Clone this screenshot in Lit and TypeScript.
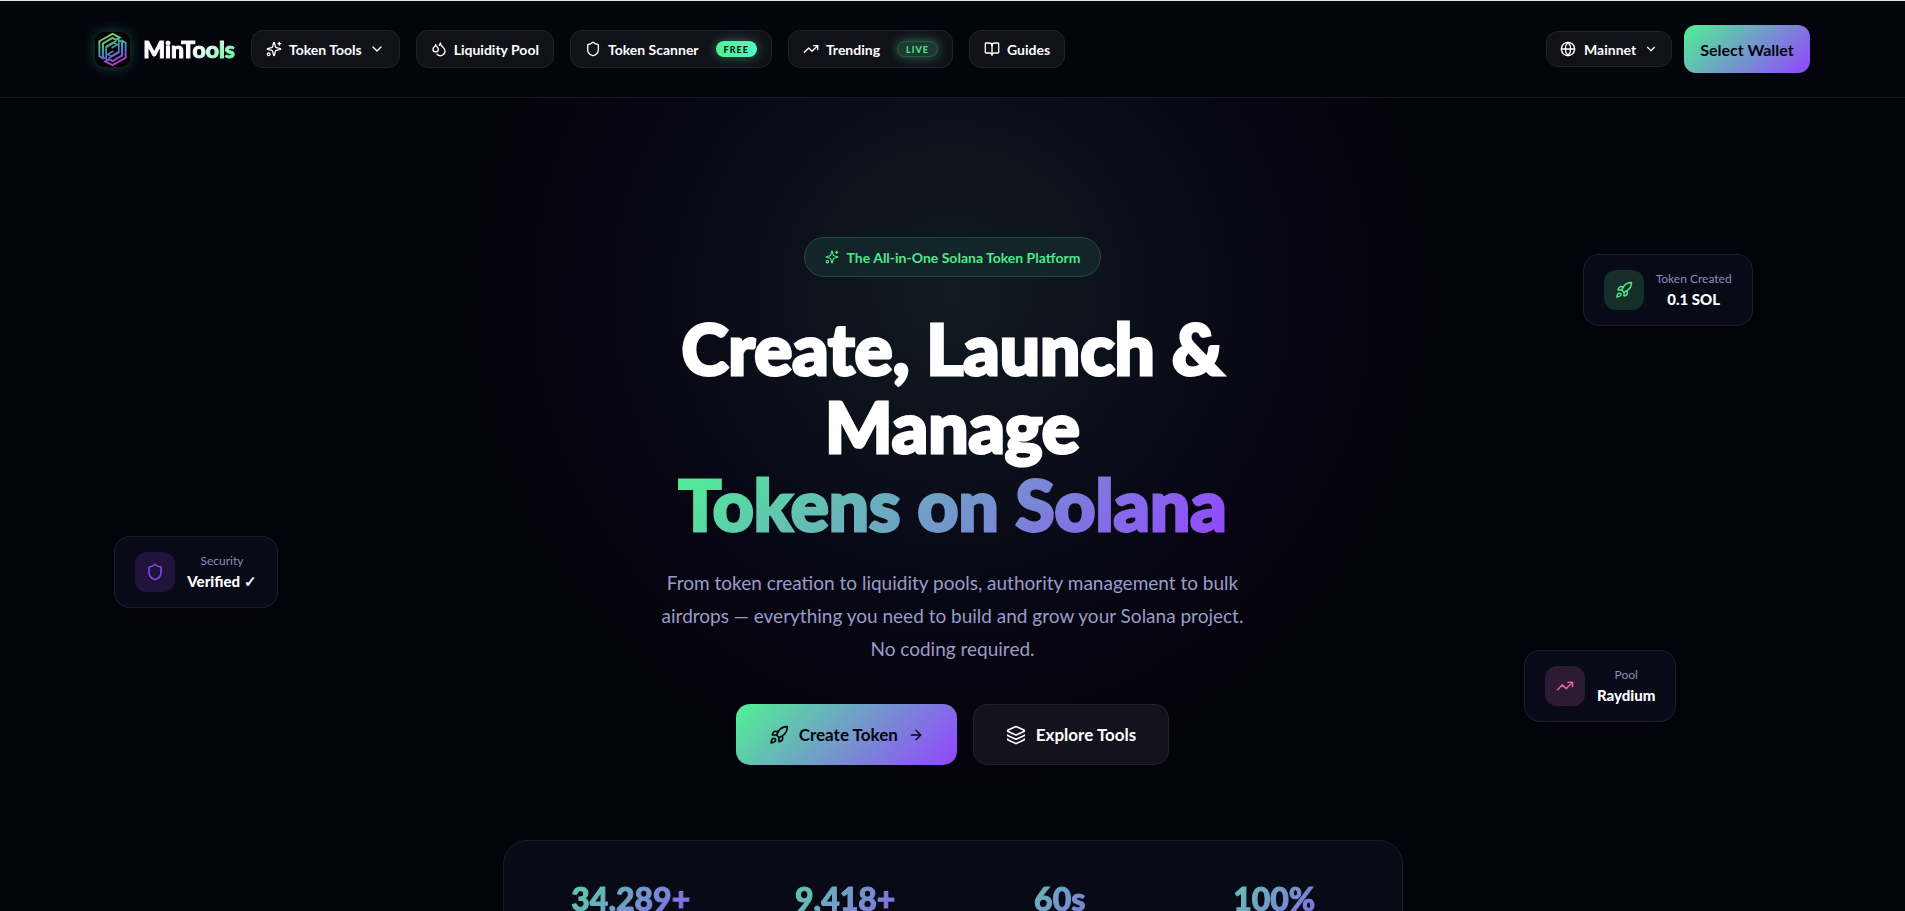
import { LitElement, html, css, svg } from "lit";
import { customElement, property } from "lit/decorators.js";

const ICONS: Record<string, unknown> = {
  sparkles: svg`<path d="M9.937 15.5A2 2 0 0 0 8.5 14.063l-6.135-1.582a.5.5 0 0 1 0-.962L8.5 9.936A2 2 0 0 0 9.937 8.5l1.582-6.135a.5.5 0 0 1 .963 0L14.063 8.5A2 2 0 0 0 15.5 9.937l6.135 1.581a.5.5 0 0 1 0 .964L15.5 14.063a2 2 0 0 0-1.437 1.437l-1.582 6.135a.5.5 0 0 1-.963 0z"/><path d="M20 2v4"/><path d="M22 4h-4"/><circle cx="4" cy="20" r="2"/>`,
  chevron: svg`<path d="m6 9 6 6 6-6"/>`,
  droplets: svg`<path d="M7 16.3c2.2 0 4-1.83 4-4.05 0-1.16-.57-2.26-1.71-3.19S7.29 6.75 7 5.3c-.29 1.45-1.14 2.84-2.29 3.76S3 11.1 3 12.25c0 2.22 1.8 4.05 4 4.05z"/><path d="M12.56 6.6A10.97 10.97 0 0 0 14 3.02c.5 2.5 2 4.9 4 6.5s3 3.5 3 5.5a6.98 6.98 0 0 1-11.91 4.97"/>`,
  shield: svg`<path d="M20 13c0 5-3.5 7.5-7.66 8.95a1 1 0 0 1-.67-.01C7.5 20.5 4 18 4 13V6a1 1 0 0 1 1-1c2 0 4.5-1.2 6.24-2.72a1.17 1.17 0 0 1 1.52 0C14.51 3.81 17 5 19 5a1 1 0 0 1 1 1z"/>`,
  trending: svg`<path d="M16 7h6v6"/><path d="m22 7-8.5 8.5-5-5L2 17"/>`,
  book: svg`<path d="M12 7v14"/><path d="M3 18a1 1 0 0 1-1-1V4a1 1 0 0 1 1-1h5a4 4 0 0 1 4 4 4 4 0 0 1 4-4h5a1 1 0 0 1 1 1v13a1 1 0 0 1-1 1h-6a3 3 0 0 0-3 3 3 3 0 0 0-3-3z"/>`,
  globe: svg`<circle cx="12" cy="12" r="10"/><path d="M12 2a14.5 14.5 0 0 0 0 20 14.5 14.5 0 0 0 0-20"/><path d="M2 12h20"/>`,
  rocket: svg`<path d="M4.5 16.5c-1.5 1.26-2 5-2 5s3.74-.5 5-2c.71-.84.7-2.13-.09-2.91a2.18 2.18 0 0 0-2.91-.09z"/><path d="m12 15-3-3a22 22 0 0 1 2-3.95A12.88 12.88 0 0 1 22 2c0 2.72-.78 7.5-6 11a22.35 22.35 0 0 1-4 2z"/><path d="M9 12H4s.55-3.03 2-4c1.62-1.08 5 0 5 0"/><path d="M12 15v5s3.03-.55 4-2c1.08-1.62 0-5 0-5"/>`,
  arrow: svg`<path d="M5 12h14"/><path d="m12 5 7 7-7 7"/>`,
  layers: svg`<path d="M12.83 2.18a2 2 0 0 0-1.66 0L2.6 6.08a1 1 0 0 0 0 1.83l8.58 3.91a2 2 0 0 0 1.66 0l8.58-3.9a1 1 0 0 0 0-1.83z"/><path d="M2 12a1 1 0 0 0 .58.91l8.6 3.91a2 2 0 0 0 1.65 0l8.58-3.9A1 1 0 0 0 22 12"/><path d="M2 17a1 1 0 0 0 .58.91l8.6 3.91a2 2 0 0 0 1.65 0l8.58-3.9A1 1 0 0 0 22 17"/>`,
};

const icon = (name: string, size = 16) => html`<svg
  width=${size}
  height=${size}
  viewBox="0 0 24 24"
  fill="none"
  stroke="currentColor"
  stroke-width="2"
  stroke-linecap="round"
  stroke-linejoin="round"
  aria-hidden="true"
>${ICONS[name]}</svg>`;

@customElement("brand-logo")
class BrandLogo extends LitElement {
  static styles = css`
    :host {
      display: block;
      line-height: 0;
    }
    .mark {
      width: 35px;
      height: 35px;
      border-radius: 9px;
      background: #000;
      box-shadow: 0 0 14px rgba(80, 240, 150, 0.3);
    }
  `;
  render() {
    return html`<svg class="mark" viewBox="0 0 36 36" fill="none" aria-hidden="true">
      <defs>
        <linearGradient id="g" x1="12" y1="3" x2="24" y2="33" gradientUnits="userSpaceOnUse">
          <stop offset="0" stop-color="#86cf5c" />
          <stop offset="0.4" stop-color="#3fa79f" />
          <stop offset="0.62" stop-color="#5b76c8" />
          <stop offset="1" stop-color="#c02fd0" />
        </linearGradient>
      </defs>
      <g stroke="url(#g)" stroke-linejoin="miter">
        <path stroke-width="2" d="M18 2 4.500 9.500V25L8 27V12L18 6l3.500 2 4-2.200z" />
        <path stroke-width="1.700" d="M8.500 12.500v13.500l3 1.700V15L22 9" />
        <path stroke-width="1.700" d="m12 15.500 7.500-4.300 3.500 1.800-6 3.500" />
        <path stroke-width="2" d="M18 34 31.500 26.500V11L28 9v15L18 30l-3.500-2-4 2.200z" />
        <path stroke-width="1.700" d="M27.500 23.500V10l-3-1.700V21L14 27" />
        <path stroke-width="1.700" d="m24 20.500-7.500 4.300-3.500-1.800 6-3.500" />
      </g>
    </svg>`;
  }
}

@customElement("floating-card")
class FloatingCard extends LitElement {
  @property() icon = "";
  @property() label = "";
  @property() value = "";
  @property() tone = "green";
  static styles = css`
    :host {
      display: flex;
      align-items: center;
      gap: 12px;
      height: 72px;
      padding: 0 20px;
      border: 1px solid rgba(255, 255, 255, 0.08);
      border-radius: 16px;
      background: #080a17;
      box-shadow: 0 8px 24px rgba(0, 0, 0, 0.3);
      text-align: center;
    }
    .tile {
      display: grid;
      place-items: center;
      width: 40px;
      height: 40px;
      border-radius: 12px;
    }
    .green {
      color: #4ee88c;
      background: #152e2a;
    }
    .purple {
      color: #8a45f5;
      background: #20143d;
    }
    .pink {
      color: #df5fa5;
      background: #2d1b33;
    }
    .label {
      font-size: 12px;
      line-height: 18px;
      color: #8b8cb8;
    }
    .value {
      font-size: 15px;
      line-height: 22px;
      font-weight: 900;
      color: #fff;
    }
  `;
  render() {
    return html`<div class="tile ${this.tone}">${icon(this.icon, 18)}</div>
      <div>
        <div class="label">${this.label}</div>
        <div class="value">${this.value}</div>
      </div>`;
  }
}

@customElement("app-root")
class AppRoot extends LitElement {
  static styles = css`
    :host {
      display: flex;
      flex-direction: column;
      height: 100vh;
      overflow: hidden;
      background: #03030b;
      color: #fff;
      font-family: Lato, "Noto Sans", sans-serif;
    }
    * {
      box-sizing: border-box;
    }
    button,
    a {
      font-family: inherit;
      color: inherit;
      text-decoration: none;
      white-space: nowrap;
      cursor: pointer;
    }
    svg {
      flex: none;
    }
    header {
      display: flex;
      align-items: center;
      gap: 16px;
      flex: none;
      height: 98px;
      padding: 0 5%;
      border-top: 1px solid #dfe8e2;
      border-bottom: 1px solid #181821;
      background: #04040d;
    }
    .brand {
      display: flex;
      align-items: center;
      gap: 13px;
    }
    .name {
      font-size: 23px;
      font-weight: 900;
      background: linear-gradient(135deg, #fff 55%, #50f094 100%);
      -webkit-background-clip: text;
      background-clip: text;
      color: transparent;
      -webkit-text-stroke: 1px transparent;
    }
    nav {
      display: flex;
      flex: 1;
      gap: 16px;
    }
    .item {
      display: flex;
      align-items: center;
      gap: 7px;
      height: 38px;
      padding: 0 14px;
      border: 1px solid #22222b;
      border-radius: 12px;
      background: #111119;
      font-size: 14px;
      font-weight: 700;
    }
    .network {
      height: 36px;
      padding: 0 13px;
      gap: 8px;
    }
    .tag {
      display: flex;
      align-items: center;
      height: 16px;
      margin-left: 10px;
      padding: 0 8px;
      border-radius: 8px;
      font-size: 9px;
      font-weight: 900;
      letter-spacing: 1px;
      box-shadow: 0 0 12px rgba(80, 250, 170, 0.4);
    }
    .free {
      color: #04150d;
      background: linear-gradient(90deg, #50f094, #52fbc4);
    }
    .live {
      color: #48e080;
      background: #1b3a31;
      border: 1px solid #2d5a45;
    }
    .actions {
      display: flex;
      align-items: center;
      gap: 12px;
    }
    .wallet {
      height: 48px;
      padding: 0 16px;
      border: 0;
      border-radius: 12px;
      background: linear-gradient(135deg, #50f094, #9345ff);
      color: #05050f;
      font-size: 16px;
      font-weight: 700;
    }
    main {
      position: relative;
      flex: 1;
      display: flex;
      flex-direction: column;
      align-items: center;
      padding-top: 139px;
      background: radial-gradient(circle 340px at 50% 190px, rgba(24, 80, 30, 0.24), transparent 100%),
        radial-gradient(circle 500px at 50% 200px, rgba(62, 36, 124, 0.2), transparent 100%);
    }
    .badge {
      display: flex;
      align-items: center;
      gap: 8px;
      height: 40px;
      padding: 0 20px;
      border: 1px solid #1f4f3c;
      border-radius: 20px;
      background: #132528;
      color: #4ee88c;
      font-size: 14px;
      font-weight: 700;
    }
    h1 {
      margin: 32px 0 0;
      font-size: 71px;
      line-height: 78px;
      font-weight: 900;
      text-align: center;
      -webkit-text-stroke: 3px #fff;
      paint-order: stroke fill;
    }
    .line {
      display: block;
      width: fit-content;
      margin: 0 auto;
      white-space: nowrap;
    }
    .accent {
      background: linear-gradient(135deg, #50f094, #9345ff);
      -webkit-background-clip: text;
      background-clip: text;
      color: transparent;
      -webkit-text-stroke-color: transparent;
    }
    .lead {
      width: 600px;
      max-width: 90%;
      margin: 23px 0 0;
      color: #9a9cc8;
      font-size: 19px;
      line-height: 33px;
      text-align: center;
    }
    .cta {
      display: flex;
      gap: 16px;
      margin-top: 39px;
    }
    .big {
      display: flex;
      align-items: center;
      gap: 10px;
      height: 61px;
      padding: 0 32px;
      border: 1px solid #22222b;
      border-radius: 14px;
      background: #14121c;
      font-size: 17px;
      font-weight: 700;
    }
    .primary {
      border-color: transparent;
      background: linear-gradient(135deg, #50f094, #9345ff) border-box;
      color: #05050f;
    }
    .stats {
      display: grid;
      grid-template-columns: repeat(4, 1fr);
      gap: 24px;
      flex: none;
      width: 900px;
      max-width: 90%;
      margin-top: 75px;
      padding: 38px 32px;
      border: 1px solid #1b1b27;
      border-radius: 24px;
      background: #080a15;
    }
    .stat {
      background: linear-gradient(135deg, #50f094, #9345ff);
      -webkit-background-clip: text;
      background-clip: text;
      color: transparent;
      -webkit-text-stroke: 1px transparent;
      font-size: 32px;
      line-height: 40px;
      font-weight: 900;
      text-align: center;
    }
    .float {
      position: absolute;
    }
    .created {
      top: 156px;
      right: 8%;
    }
    .security {
      top: 438px;
      left: 6%;
    }
    .pool {
      top: 552px;
      right: 12%;
    }
  `;

  render() {
    return html`
      <header>
        <a class="brand" href="#"><brand-logo></brand-logo><span class="name">MinTools</span></a>
        <nav>
          <button class="item">${icon("sparkles")}Token Tools${icon("chevron")}</button>
          <a class="item" href="#">${icon("droplets")}Liquidity Pool</a>
          <a class="item" href="#">${icon("shield")}Token Scanner<span class="tag free">FREE</span></a>
          <a class="item" href="#">${icon("trending")}Trending<span class="tag live">LIVE</span></a>
          <a class="item" href="#">${icon("book")}Guides</a>
        </nav>
        <div class="actions">
          <button class="item network">${icon("globe")}Mainnet${icon("chevron", 14)}</button>
          <button class="wallet">Select Wallet</button>
        </div>
      </header>
      <main>
        <div class="badge">${icon("sparkles", 14)}The All-in-One Solana Token Platform</div>
        <h1>
          <span class="line">Create, Launch &amp;</span>
          <span class="line">Manage</span>
          <span class="line accent">Tokens on Solana</span>
        </h1>
        <p class="lead">
          From token creation to liquidity pools, authority management to bulk airdrops — everything you
          need to build and grow your Solana project. No coding required.
        </p>
        <div class="cta">
          <a class="big primary" href="#">${icon("rocket", 20)}Create Token${icon("arrow", 16)}</a>
          <a class="big" href="#">${icon("layers", 20)}Explore Tools</a>
        </div>
        <section class="stats">
          ${["34,289+", "9,418+", "60s", "100%"].map((s) => html`<div class="stat">${s}</div>`)}
        </section>
        <floating-card class="float created" icon="rocket" label="Token Created" value="0.1 SOL"></floating-card>
        <floating-card class="float security" icon="shield" label="Security" value="Verified ✓" tone="purple"></floating-card>
        <floating-card class="float pool" icon="trending" label="Pool" value="Raydium" tone="pink"></floating-card>
      </main>
    `;
  }
}
